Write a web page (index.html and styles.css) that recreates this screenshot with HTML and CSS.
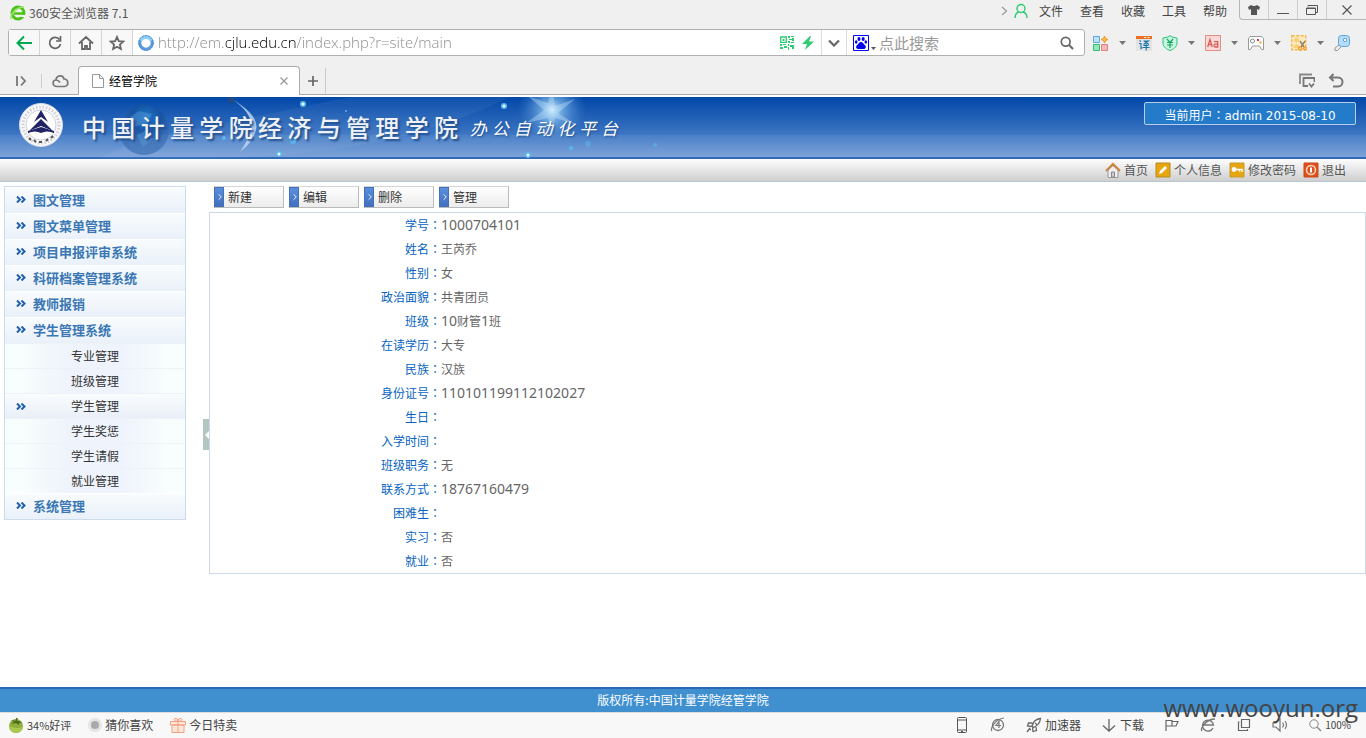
FILE: index.html
```html
<!DOCTYPE html>
<html lang="zh-CN">
<head>
<meta charset="utf-8">
<title>经管学院</title>
<link rel="stylesheet" href="styles.css">
</head>
<body>
<header class="chrome">
  <div class="titlebar">
    <svg class="i16" viewBox="0 0 16 16"><circle cx="8" cy="8" r="6" fill="none" stroke="#4cc417" stroke-width="3"/><path d="M4 8.500h9" stroke="#4cc417" stroke-width="2.500"/><path d="M11 10h5v2h-5z" fill="#f0f0f0"/><path d="M1 14C0 9 7 2 14 2" fill="none" stroke="#9be26b" stroke-width="1.500"/></svg>
    <span class="app-name">360安全浏览器 7.1</span>
    <div class="menu">
      <svg class="menu-arrow" width="7" height="10" viewBox="0 0 7 10"><path d="M1 1l4.500 4L1 9" fill="none" stroke="#999" stroke-width="1.200"/></svg>
      <svg class="menu-user" width="14" height="16" viewBox="0 0 14 16"><circle cx="7" cy="5.500" r="4" fill="none" stroke="#2ecc71" stroke-width="1.400"/><path d="M1 15c0-3.500 2-5.500 4-6M13 15c0-3.500-2-5.500-4-6" fill="none" stroke="#2ecc71" stroke-width="1.400"/></svg>
      <button>文件</button><button>查看</button><button>收藏</button><button>工具</button><button>帮助</button>
    </div>
    <div class="window-controls">
      <button aria-label="皮肤"><svg width="14" height="12" viewBox="0 0 14 12"><path d="M4 1q3 2 6 0l3 2-1 3-2-1v6H4V5L2 6 1 3z" fill="#555"/></svg></button>
      <button aria-label="最小化"><svg width="14" height="12" viewBox="0 0 14 12"><path d="M1 9.500h12" stroke="#555"/></svg></button>
      <button aria-label="还原"><svg width="14" height="12" viewBox="0 0 14 12"><path d="M3 2.500V1.500h9.500v7H11M1.500 4h9v6.500h-9zM1 4.500h10" fill="none" stroke="#555"/></svg></button>
      <button class="close" aria-label="关闭"><svg width="12" height="12" viewBox="0 0 12 12"><path d="M1.500 1.500l9 9M10.500 1.500l-9 9" stroke="#555" stroke-width="1.200"/></svg></button>
    </div>
  </div>
  <div class="address-row">
    <div class="address-box">
      <button class="nav-btn" aria-label="后退"><svg class="i16" viewBox="0 0 16 16"><path d="M8 1.500L1.500 8 8 14.500M2 8h14" fill="none" stroke="#00a94f" stroke-width="2"/></svg></button>
      <button class="nav-btn" aria-label="刷新"><svg class="i16" viewBox="0 0 16 16"><path d="M12.500 4.500A5.500 5.500 0 1 0 13.500 9M13.500 1v5H9" fill="none" stroke="#666" stroke-width="1.700"/></svg></button>
      <button class="nav-btn" aria-label="主页"><svg class="i16" viewBox="0 0 16 16"><path d="M1 8.500L8 2l7 6.500M4 7v7h3v-3h2v3h3V7" fill="none" stroke="#666" stroke-width="1.800"/></svg></button>
      <button class="nav-btn" aria-label="收藏"><svg class="i16" viewBox="0 0 16 16"><path d="M8 2l1.800 4.200 4.500.4-3.400 3 1 4.400L8 11.700 4.100 14l1-4.400-3.400-3 4.500-.4z" fill="none" stroke="#666" stroke-width="1.800"/></svg></button>
      <svg class="i16 globe" viewBox="0 0 16 16"><circle cx="8" cy="8" r="6.200" fill="none" stroke="#5b9be0" stroke-width="3"/><path d="M2.500 5.500A6.200 6.200 0 0 1 13.500 5.500" fill="none" stroke="#8ed0f4" stroke-width="3"/><circle cx="8" cy="8" r="7.300" fill="none" stroke="#4286d3" stroke-dasharray="2 1"/></svg>
      <input class="url" aria-label="地址" value="http://em.cjlu.edu.cn/index.php?r=site/main">
      <svg class="qr" width="14" height="14" viewBox="0 0 14 14"><path d="M.7 1h5.600v5.300H.7z" fill="none" stroke="#2ecc71" stroke-width="1.300"/><path d="M2.500 3h2v2h-2zM8 0h2v2H8zM11 0h3v1h-3zM9 3h3v1H9zM12 2h2v3h-2zM8 5h2v2H8zM11 6h3v1h-3zM0 8h2v2H0zM3 8h3v1H3zM4 10h3v2H4zM0 11h3v2H0zM8 8h1v2H8zM10 9h4v4h-2v-2h-2zM8 11h1v3H8z" fill="#2ecc71"/></svg>
      <svg class="bolt" width="12" height="16" viewBox="0 0 12 16"><path d="M8 1L0 9h5l-2 6 9-8.500H7L9 1z" fill="#2ecc71"/></svg>
      <button class="drop-btn" aria-label="历史"><svg width="12" height="8" viewBox="0 0 12 8"><path d="M1 1.500l5 5 5-5" fill="none" stroke="#666" stroke-width="2.200"/></svg></button>
      <svg class="i16 baidu" viewBox="0 0 16 16"><path d="M.5.500h15v15H.5z" fill="#fff" stroke="#00f"/><g fill="#00e"><ellipse cx="6" cy="4" rx="1.500" ry="2"/><ellipse cx="10.200" cy="4" rx="1.500" ry="2"/><ellipse cx="3.200" cy="7" rx="1.300" ry="1.700"/><ellipse cx="12.800" cy="7" rx="1.300" ry="1.700"/><path d="M8 7c2 0 2.500 2 4 3.300s1 3.700-1 3.700H5c-2 0-2.500-2.500-1-3.700S6 7 8 7z"/></g></svg>
      <svg class="mini-caret" width="5" height="3" viewBox="0 0 5 3"><path d="M0 0h5L2.500 3z" fill="#555"/></svg>
      <input class="search" aria-label="搜索" placeholder="点此搜索">
      <svg class="search-icon" width="14" height="14" viewBox="0 0 14 14"><circle cx="5.700" cy="5.700" r="4.400" fill="none" stroke="#666" stroke-width="1.700"/><path d="M9 9l4 4" stroke="#666" stroke-width="2"/></svg>
    </div>
    <div class="extensions">
      <svg class="i16" viewBox="0 0 16 16"><path d="M.5 1.500h6v6h-6z" fill="#bfe3fa" stroke="#5aa7dc"/><path d="M.5 9.500h6v6h-6z" fill="#8eeabb" stroke="#3bb878"/><path d="M8.500 9.500h6v6h-6z" fill="#f9b9b9" stroke="#df7f7f"/><path d="M11.500 1l1 2.500 2.500 1-2.500 1-1 2.500-1-2.500-2.500-1 2.500-1z" fill="#ffc13b" stroke="#ee9520"/></svg>
      <svg class="caret" viewBox="0 0 7 4"><path d="M0 0h7L3.500 4z" fill="#777"/></svg>
      <svg class="i16" viewBox="0 0 16 16"><path d="M0 3h16v13H0z" fill="#e4e4e4"/><path d="M0 1h16v3H0z" fill="#f07022"/><path d="M8 2.500h2M11.500 2.500h2" stroke="#fff"/><path d="M3.500 5.500l1.500 1M3 8.500h2v5l1.500-1M7.500 6h5l-5 3.500M8.500 6.500l4.500 3M7.500 10.500h5M7 12.500h6.500M10.200 9v6.500" stroke="#1676a6" fill="none" stroke-width="1.100"/></svg>
      <svg class="i16" viewBox="0 0 16 16"><path d="M8 .5l2 1.500 5 1v5c0 4-4 6.500-7 7.500-3-1-7-3.500-7-7.500V3l5-1z" fill="#c8f8e0" stroke="#2fbe80"/><path d="M5 4l3 3.500L11 4M8 7v6M5 7.500h6M5 10h6" fill="none" stroke="#18a666" stroke-width="1.200"/></svg>
      <svg class="caret" viewBox="0 0 7 4"><path d="M0 0h7L3.500 4z" fill="#777"/></svg>
      <svg class="i16" viewBox="0 0 16 16"><path d="M.5.500h15v15H.5z" fill="#fbd9d6" stroke="#e28d88"/><path d="M2.700 12L5 4.500 7.300 12M3.500 9.500h3M9 6.700h3.700V12H9.800Q9 12 9 10.600T9.800 9.200h2.900" fill="none" stroke="#d9605a" stroke-width="1.300"/></svg>
      <svg class="caret" viewBox="0 0 7 4"><path d="M0 0h7L3.500 4z" fill="#777"/></svg>
      <svg class="i16" viewBox="0 0 16 16"><path d="M2 1.500h12l1.500 2v11h-2L11.500 11h-7l-2 3.500h-2v-11z" fill="#fff" stroke="#999"/><circle cx="4.500" cy="6" r="2" fill="none" stroke="#888"/><path d="M9 4h2v2H9z" fill="#d33"/><path d="M11.500 6.500h2v2h-2z" fill="#f39a24"/></svg>
      <svg class="caret" viewBox="0 0 7 4"><path d="M0 0h7L3.500 4z" fill="#777"/></svg>
      <svg class="i16" viewBox="0 0 16 16"><path d="M.7.700h14v14H.7z" fill="#fdeac0" stroke="#f0b84a" stroke-width="1.400" stroke-dasharray="3 1.500"/><circle cx="5.500" cy="5" r="2.500" fill="#f9d178"/><path d="M2 13c0-5 7-5 7 0z" fill="#f9d178"/><path d="M9 6l4 6M14 6l-4 6" stroke="#8d8268" stroke-width="1.400"/><circle cx="9.200" cy="13.500" r="1.800" fill="#ffd071" stroke="#f08c1e"/><circle cx="14" cy="13.500" r="1.500" fill="#ffd071" stroke="#f08c1e"/></svg>
      <svg class="caret" viewBox="0 0 7 4"><path d="M0 0h7L3.500 4z" fill="#777"/></svg>
      <svg class="i16" viewBox="0 0 16 16"><path d="M5 10l-4 3v2.500h2.500L7 12" fill="#eee" stroke="#999"/><rect x="4.500" y=".5" width="11" height="11" rx="3" fill="#b5dcf8" stroke="#5fa3db"/><circle cx="11" cy="5" r="1.700" fill="#fff" stroke="#5fa3db"/></svg>
    </div>
  </div>
  <div class="tab-row">
    <button class="icon-btn side" aria-label="侧边栏"><svg width="11" height="12" viewBox="0 0 11 12"><path d="M1 1v10M5 1.500L9 6l-4 4.500" fill="none" stroke="#777" stroke-width="1.800"/></svg></button>
    <button class="icon-btn cloud" aria-label="云"><svg width="17" height="14" viewBox="0 0 17 14"><path d="M5 12.500C-.5 12.500.5 6 4 6 4.500 1 11 .5 12 5c5 0 5 7.500.5 7.500zM4 6c2.500 0 3 1 4 2.500" fill="none" stroke="#777" stroke-width="1.700"/></svg></button>
    <div class="tab">
      <svg width="12" height="14" viewBox="0 0 12 14"><path d="M.5.500h7l4 4v9H.5zM7.500.500v4h4" fill="#fff" stroke="#999"/></svg>
      <span>经管学院</span>
      <button class="icon-btn" aria-label="关闭标签"><svg width="8" height="8" viewBox="0 0 8 8"><path d="M.5.500l7 7M7.500.500l-7 7" stroke="#999" stroke-width="1.300"/></svg></button>
    </div>
    <button class="icon-btn plus" aria-label="新标签"><svg width="10" height="10" viewBox="0 0 10 10"><path d="M5 0v10M0 5h10" stroke="#666" stroke-width="1.700"/></svg></button>
    <div class="tab-tools">
      <button class="icon-btn" aria-label="标签列表"><svg class="i16" viewBox="0 0 16 16"><path d="M1 11V1.500h12" fill="none" stroke="#888" stroke-width="1.800"/><path d="M9 13H4.500V5h11v4M10 10.500l2.500 3 2.500-3" fill="none" stroke="#777" stroke-width="1.800"/></svg></button>
      <button class="icon-btn" aria-label="恢复标签"><svg class="i16" viewBox="0 0 16 16"><path d="M5.500 1L2 4.500 5.500 8M2 4.500h8c6 0 6 9 0 9H5" fill="none" stroke="#777" stroke-width="2"/></svg></button>
    </div>
  </div>
</header>

<div class="banner">
  <svg class="banner-art" width="700" height="61" viewBox="0 0 700 61">
    <defs>
      <radialGradient id="flare"><stop offset="0" stop-color="#d5f1ff"/><stop offset=".3" stop-color="#8dc4ef" stop-opacity=".7"/><stop offset="1" stop-color="#4c8bd5" stop-opacity="0"/></radialGradient>
      <radialGradient id="earth" cx=".55" cy=".25"><stop offset="0" stop-color="#1f78c9"/><stop offset=".6" stop-color="#15519f"/><stop offset="1" stop-color="#2d64ab" stop-opacity=".7"/></radialGradient>
    </defs>
    <path d="M100 61Q135 40 200 31L350 0h160q-120 60-300 61z" fill="#fff" opacity=".05"/>
    <circle cx="144" cy="33" r="25" fill="url(#earth)" opacity=".8"/>
    <path d="M130 20l9-6 13 3-5 9-13 4zM137 38l10-5 6 9-10 8z" fill="#5c9ed6" opacity=".45"/>
    <path d="M232 2q28 17 24 31-3 12-16 22 9-13 11-23 2-16-19-30z" fill="#c4dcf6" opacity=".8"/>
    <circle cx="231" cy="3" r="3" fill="#274a7d"/>
    <circle cx="552" cy="13" r="34" fill="url(#flare)"/>
    <path d="M552-12l3 21 20-7-17 14 19 12-22-7-3 20-4-20-22 5 18-13-16-14 20 7z" fill="#cbeaff" opacity=".35"/>
    <g fill="#5bb8ef"><circle cx="303" cy="7" r="3"/><circle cx="293" cy="44" r="3"/><circle cx="279" cy="57" r="3"/><circle cx="504" cy="9" r="3"/><circle cx="528" cy="58" r="3"/><circle cx="346" cy="14" r="1"/><circle cx="571" cy="51" r="2"/><circle cx="588" cy="47" r="3" opacity=".5"/><circle cx="655" cy="48" r="2" opacity=".6"/><circle cx="224" cy="41" r="2"/></g>
    <g fill="#e9fbff"><circle cx="303" cy="7" r="1.500"/><circle cx="279" cy="57" r="1.500"/><circle cx="504" cy="9" r="1.500"/><circle cx="528" cy="58" r="1.500"/></g>
  </svg>
  <svg class="logo" width="46" height="46" viewBox="0 0 46 46">
    <circle cx="23" cy="23" r="21.500" fill="#f8f8fa" stroke="#d8dce8"/>
    <circle cx="23" cy="23" r="18" fill="none" stroke="#cfcfd8" stroke-width="3" stroke-dasharray="1.500 1.800"/>
    <circle cx="23" cy="23" r="15" fill="#fff" stroke="#bbc" stroke-width=".7"/>
    <path d="M23 8l7 12-7-5-7 5z" fill="#202464"/><path d="M23 17l12 12-12-5-12 5z" fill="#202464"/><path d="M10 31q7-3 13 0 6-3 13 0v-2l-13-4-13 4z" fill="#202464"/>
    <path d="M11 36l2 2M16 38l2 2M21 40h3M28 39l2-2M33 36l2-2" stroke="#555" stroke-width="2"/>
  </svg>
  <h1>中国计量学院经济与管理学院</h1>
  <p class="platform">办公自动化平台</p>
  <div class="user-box">当前用户<span class="colon" lang="zh-TW">：</span>admin 2015-08-10</div>
</div>

<nav class="quick-nav">
  <a href="#"><svg class="i16" viewBox="0 0 16 16"><path d="M3 8v7.500h10V8L8 3.500z" fill="#eee" stroke="#999"/><path d="M1 9l7-7 7 7" fill="none" stroke="#c9853f" stroke-width="2.200"/><path d="M6.500 10h3v5h-3z" fill="#ccc" stroke="#888"/></svg>首页</a>
  <a href="#"><svg class="i16" viewBox="0 0 16 16"><path d="M1 1h14v14H1z" fill="#e6a610" stroke="#b98a20"/><path d="M4 12l1-3 5-5 2 2-5 5z" fill="#fff"/></svg>个人信息</a>
  <a href="#"><svg class="i16" viewBox="0 0 16 16"><path d="M1 1h14v14H1z" fill="#e6a610" stroke="#c99a30"/><circle cx="5" cy="7.500" r="2.400" fill="#fff"/><path d="M7 7.500h6v2.500M10.500 7.500v2" fill="none" stroke="#fff" stroke-width="1.500"/></svg>修改密码</a>
  <a href="#"><svg class="i16" viewBox="0 0 16 16"><path d="M1 1h14v14H1z" fill="#e04e1a" stroke="#c8491e"/><circle cx="8" cy="8" r="4.500" fill="none" stroke="#ffd9c8" stroke-width="1.500"/><path d="M8 5.500v5" stroke="#fff" stroke-width="2"/></svg>退出</a>
</nav>

<div class="content">
  <aside class="sidebar">
    <a class="group" href="#"><svg class="chev" viewBox="0 0 10 7"><path d="M1 .5l3 3-3 3M5.500.500l3 3-3 3" fill="none" stroke="#1f5fae" stroke-width="2"/></svg>图文管理</a>
    <a class="group" href="#"><svg class="chev" viewBox="0 0 10 7"><path d="M1 .5l3 3-3 3M5.500.500l3 3-3 3" fill="none" stroke="#1f5fae" stroke-width="2"/></svg>图文菜单管理</a>
    <a class="group" href="#"><svg class="chev" viewBox="0 0 10 7"><path d="M1 .5l3 3-3 3M5.500.500l3 3-3 3" fill="none" stroke="#1f5fae" stroke-width="2"/></svg>项目申报评审系统</a>
    <a class="group" href="#"><svg class="chev" viewBox="0 0 10 7"><path d="M1 .5l3 3-3 3M5.500.500l3 3-3 3" fill="none" stroke="#1f5fae" stroke-width="2"/></svg>科研档案管理系统</a>
    <a class="group" href="#"><svg class="chev" viewBox="0 0 10 7"><path d="M1 .5l3 3-3 3M5.500.500l3 3-3 3" fill="none" stroke="#1f5fae" stroke-width="2"/></svg>教师报销</a>
    <a class="group" href="#"><svg class="chev" viewBox="0 0 10 7"><path d="M1 .5l3 3-3 3M5.500.500l3 3-3 3" fill="none" stroke="#1f5fae" stroke-width="2"/></svg>学生管理系统</a>
    <a class="sub" href="#">专业管理</a>
    <a class="sub" href="#">班级管理</a>
    <a class="sub active" href="#"><svg class="chev" viewBox="0 0 10 7"><path d="M1 .5l3 3-3 3M5.500.500l3 3-3 3" fill="none" stroke="#1f5fae" stroke-width="2"/></svg>学生管理</a>
    <a class="sub" href="#">学生奖惩</a>
    <a class="sub" href="#">学生请假</a>
    <a class="sub" href="#">就业管理</a>
    <a class="group" href="#"><svg class="chev" viewBox="0 0 10 7"><path d="M1 .5l3 3-3 3M5.500.500l3 3-3 3" fill="none" stroke="#1f5fae" stroke-width="2"/></svg>系统管理</a>
  </aside>
  <div class="gutter"><button class="collapse" aria-label="收起菜单"><svg width="4" height="8" viewBox="0 0 4 8"><path d="M4 0v8L0 4z" fill="#fff"/></svg></button></div>
  <main>
    <div class="toolbar">
      <button><svg width="10" height="20" viewBox="0 0 10 20"><path d="M4 7l3 3-3 3" fill="none" stroke="#fff"/></svg><span>新建</span></button>
      <button><svg width="10" height="20" viewBox="0 0 10 20"><path d="M4 7l3 3-3 3" fill="none" stroke="#fff"/></svg><span>编辑</span></button>
      <button><svg width="10" height="20" viewBox="0 0 10 20"><path d="M4 7l3 3-3 3" fill="none" stroke="#fff"/></svg><span>删除</span></button>
      <button><svg width="10" height="20" viewBox="0 0 10 20"><path d="M4 7l3 3-3 3" fill="none" stroke="#fff"/></svg><span>管理</span></button>
    </div>
    <table class="details">
      <tr><th scope="row">学号<span class="colon" lang="zh-TW">：</span></th><td><span class="num">1000704101</span></td></tr>
      <tr><th scope="row">姓名<span class="colon" lang="zh-TW">：</span></th><td>王芮乔</td></tr>
      <tr><th scope="row">性别<span class="colon" lang="zh-TW">：</span></th><td>女</td></tr>
      <tr><th scope="row">政治面貌<span class="colon" lang="zh-TW">：</span></th><td>共青团员</td></tr>
      <tr><th scope="row">班级<span class="colon" lang="zh-TW">：</span></th><td><span class="num">10</span>财管<span class="num">1</span>班</td></tr>
      <tr><th scope="row">在读学历<span class="colon" lang="zh-TW">：</span></th><td>大专</td></tr>
      <tr><th scope="row">民族<span class="colon" lang="zh-TW">：</span></th><td>汉族</td></tr>
      <tr><th scope="row">身份证号<span class="colon" lang="zh-TW">：</span></th><td><span class="num">110101199112102027</span></td></tr>
      <tr><th scope="row">生日<span class="colon" lang="zh-TW">：</span></th><td></td></tr>
      <tr><th scope="row">入学时间<span class="colon" lang="zh-TW">：</span></th><td></td></tr>
      <tr><th scope="row">班级职务<span class="colon" lang="zh-TW">：</span></th><td>无</td></tr>
      <tr><th scope="row">联系方式<span class="colon" lang="zh-TW">：</span></th><td><span class="num">18767160479</span></td></tr>
      <tr><th scope="row">困难生<span class="colon" lang="zh-TW">：</span></th><td></td></tr>
      <tr><th scope="row">实习<span class="colon" lang="zh-TW">：</span></th><td>否</td></tr>
      <tr><th scope="row">就业<span class="colon" lang="zh-TW">：</span></th><td>否</td></tr>
    </table>
  </main>
</div>

<footer class="copyright">版权所有:中国计量学院经管学院</footer>

<div class="statusbar">
  <div class="status-left">
    <button class="rating"><svg class="i16" viewBox="0 0 16 16"><circle cx="8" cy="9" r="7" fill="#8fae3a"/><path d="M1 9a7 7 0 0 0 14 0q-4 4-14 0z" fill="#a9c850"/><path d="M8 4L3 3l3 2-3 2 5-1 3 2v-2l3 0-3-2z" fill="#4b6b22"/><path d="M8 5l1-4" stroke="#4b6b22" stroke-width="1.500"/></svg>34%好评</button>
    <button><svg width="14" height="14" viewBox="0 0 14 14"><circle cx="7" cy="7" r="7" fill="#e4e4e4"/><circle cx="7" cy="7" r="4" fill="#aaa"/></svg>猜你喜欢</button>
    <button><svg class="i16" viewBox="0 0 16 16"><path d="M2 8h12v7.500H2zM.5 4.500h15V8H.5zM8 4.500v11M8 4C5 5 3 2.500 5 1.500S8 3 8 4c0-1 1-3.500 3-2.500S11 5 8 4" fill="#ffe7dc" stroke="#f0a080"/></svg>今日特卖</button>
  </div>
  <div class="status-right">
    <button aria-label="手机"><svg class="i16" viewBox="0 0 16 16"><rect x="3.500" y=".5" width="9" height="15" rx="1" fill="none" stroke="#555"/><path d="M3.500 3h9M3.500 13h9M7 14.500h2" stroke="#555"/></svg></button>
    <button aria-label="内核"><svg class="i16" viewBox="0 0 16 16"><circle cx="8" cy="8" r="5.500" fill="none" stroke="#777" stroke-width="1.300"/><path d="M2 14c-2-2 3-12 12-13M9 11V4.500L6 8.500h5" fill="none" stroke="#777" stroke-width="1.200"/></svg></button>
    <button><svg class="i16" viewBox="0 0 16 16"><path d="M6 9C7 5 10 2 14.500 1.500 14 6 11 9 7.500 10.500zM6 6H2.500L1.500 9l4 .5M10 10l.5 3.500L7 14.500l-.5-4M4 11l-3 4M9 6l2 1.500M3 12l2 1" fill="none" stroke="#666" stroke-width="1.300"/></svg>加速器</button>
    <button><svg class="i16" viewBox="0 0 16 16"><path d="M8 2v12M2 8.500L8 14l6-5.500" fill="none" stroke="#666" stroke-width="1.300"/></svg>下载</button>
    <button aria-label="旗标"><svg class="i16" viewBox="0 0 16 16"><path d="M2 14V3.500h6V9H2M8 4.500h6L12 9H8" fill="none" stroke="#666" stroke-width="1.200"/></svg></button>
    <button aria-label="浏览器"><svg class="i16" viewBox="0 0 16 16"><path d="M13 11a5.500 5.500 0 1 1 .5-3H4M2 14c-2-2 4-12 13-12" fill="none" stroke="#777" stroke-width="1.400"/></svg></button>
    <button aria-label="窗口"><svg class="i16" viewBox="0 0 16 16"><path d="M5.500 2.500h8v8h-8zM3.500 5h-1v8.500h9V12" fill="none" stroke="#666" stroke-width="1.200"/></svg></button>
    <button aria-label="声音"><svg class="i16" viewBox="0 0 16 16"><path d="M1 6h3l4-4v12l-4-4H1zM10.500 5.500q2 2.500 0 5M13 4q3 4 0 8" fill="none" stroke="#777" stroke-width="1.200"/></svg></button>
    <button class="zoom"><svg width="14" height="14" viewBox="0 0 14 14"><circle cx="6" cy="6" r="4.200" fill="none" stroke="#888"/><path d="M9 9l4 4" stroke="#888" stroke-width="1.500"/></svg>100%</button>
  </div>
</div>
<div class="watermark">www.wooyun.org</div>
</body>
</html>
```
FILE: styles.css
```css
* { box-sizing: border-box; }
body {
  margin: 0;
  min-height: 100vh;
  display: flex;
  flex-direction: column;
  position: relative;
  background: #fff;
  font: 12px/16px "Noto Sans CJK SC", sans-serif;
  color: #666;
}
button, input { font: inherit; color: inherit; background: none; border: 0; padding: 0; margin: 0; }
button { display: flex; align-items: center; justify-content: center; white-space: nowrap; }
a { text-decoration: none; color: inherit; }
svg { flex: none; display: block; }
.i16 { width: 16px; height: 16px; }
.colon { font-family: "Noto Sans CJK TC", sans-serif; }

.chrome { background: #f0f0f0; border-bottom: 2px solid #fff; }
.titlebar { display: flex; height: 29px; padding-left: 10px; }
.titlebar > .i16 { margin-top: 5px; }
.app-name { margin: 5px auto 0 3px; color: #555; }
.menu { display: flex; height: 22px; align-items: center; gap: 17px; padding-right: 12px; color: #444; }
.menu-user { margin-left: -11px; margin-right: -6px; }
.window-controls { display: flex; height: 20px; border: solid #b5b5b5; border-width: 0 0 1px 1px; border-bottom-left-radius: 4px; }
.window-controls button { width: 29px; border-right: 1px solid #ccc; }
.window-controls .close { width: 39px; border: 0; }

.address-row { display: flex; align-items: center; height: 27px; padding: 0 16px 0 8px; }
.address-box { flex: 1; height: 27px; display: flex; align-items: center; background: #fff; border: 1px solid #b0b0b0; border-radius: 3px; }
.nav-btn { width: 31px; height: 25px; background: #f8f8f8; border-right: 1px solid #d5d5d5; }
.globe { margin: 0 4px 0 5px; }
.url {
  flex: 1;
  min-width: 0;
  height: 25px;
  font: 300 15px/25px "Open Sans", sans-serif;
  color: transparent;
  caret-color: #333;
  background: linear-gradient(90deg, #888 67px, #000 67px, #000 138px, #888 138px);
  -webkit-background-clip: text;
  background-clip: text;
}
.bolt { margin: 0 7px 0 8px; }
.drop-btn { width: 26px; height: 25px; border: solid #ddd; border-width: 0 1px; }
.baidu { margin-left: 6px; }
.mini-caret { margin: 11px 3px 0 2px; }
.search { width: 181px; font-size: 15px; line-height: 25px; height: 25px; }
.search::placeholder { color: #999; }
.search-icon { margin-right: 10px; }
.extensions { display: flex; align-items: center; gap: 10px; margin-left: 8px; }
.caret { width: 7px; height: 4px; }

.tab-row { display: flex; align-items: flex-end; height: 39px; padding-left: 16px; border-bottom: 1px solid #aaa; }
.icon-btn { height: 26px; }
.side { width: 26px; justify-content: flex-start; border-right: 1px solid #ccc; height: 14px; margin-bottom: 6px; }
.cloud { margin: 0 9px 0 10px; }
.tab { width: 222px; height: 29px; margin-bottom: -1px; display: flex; align-items: center; gap: 5px; padding: 0 11px 0 13px; color: #000; background: #fff; border: 1px solid #aaa; border-bottom: 0; border-radius: 4px 4px 0 0; }
.tab .icon-btn { margin-left: auto; }
.plus { width: 26px; border-right: 1px solid #ccc; }
.tab-tools { display: flex; gap: 13px; margin-left: auto; padding-right: 22px; }

.banner { position: relative; display: flex; align-items: flex-start; height: 62px; padding: 5px 10px 0 18px; border-bottom: 2px solid #2f6abb; background: linear-gradient(#0247a8, #3c75c2 62%, #4a80c8 64%, #7da3d8); color: #fff; }
.banner-art { position: absolute; left: 0; top: 0; }
.banner > :not(.banner-art) { position: relative; }
.banner h1 { margin: 9px 0 0 18px; width: 376px; font-size: 24px; line-height: 32px; font-weight: 500; text-align-last: justify; color: #eef1f6; text-shadow: 2px 2px 2px #234f8c; }
.platform { margin: 14px auto 0 12px; width: 148px; font-size: 17px; line-height: 24px; font-style: italic; text-align-last: justify; text-shadow: 1px 1px 2px #234f8c; }
.user-box { min-width: 212px; height: 23px; line-height: 21px; font-family: "DejaVu Sans", "Noto Sans CJK SC", sans-serif; text-align: center; background: #237bc9; border: 1px solid #b9cfe9; border-radius: 2px; padding-top: 1px; }

.quick-nav { display: flex; justify-content: flex-end; gap: 7px; height: 23px; padding: 0 20px; align-items: center; background: linear-gradient(#fdfdfd, #cfcfcf); border-bottom: 1px solid #b7c5d4; }
.quick-nav a { display: flex; gap: 3px; align-items: center; color: #555; }

.content { flex: 1; display: flex; padding-left: 4px; }
.sidebar { width: 182px; align-self: flex-start; margin-top: 4px; border: 1px solid #cddcea; }
.sidebar a { display: flex; align-items: center; }
.chev { width: 10px; height: 7px; }
.group { height: 26px; padding-left: 11px; padding-bottom: 2px; gap: 7px; font-size: 13px; font-weight: 700; color: #3a77b4; background: linear-gradient(#f8fcfd, #eaf0f9); border-top: 1px solid #fff; }
.sub { position: relative; height: 25px; justify-content: center; color: #333; background: linear-gradient(90deg, #f8fdfd 10%, #eff3fc 35%, #eff3fc 65%, #f8fdfd 90%); border-top: 1px solid #eef2f6; }
.sub.active { background: linear-gradient(#fafcfd, #e9eff8); }
.sub .chev { position: absolute; left: 11px; }
.gutter { width: 23px; display: flex; align-items: center; justify-content: flex-end; }
.collapse { width: 6px; height: 31px; background: #b2c6c2; justify-content: flex-end; }

main { flex: 1; min-width: 0; padding-top: 4px; }
.toolbar { display: flex; gap: 5px; padding-left: 5px; }
.toolbar button { width: 70px; height: 22px; justify-content: flex-start; gap: 4px; background: linear-gradient(#fff, #ececec); border: solid #bbb; border-width: 1px 1px 1px 0; border-top-color: #d5d5d5; color: #333; }
.toolbar svg { background: linear-gradient(#5a90dc, #416fbc); border: solid #8ab2e8; border-width: 0 0 0 1px; outline: 1px solid #4170bd; outline-offset: -1px; }
.details { width: 100%; margin-top: 4px; border: 1px solid #cbd9e6; border-spacing: 0; table-layout: fixed; }
.details tr { height: 24px; }
.details th, .details td { padding: 0; line-height: 24px; height: 24px; }
.details th { width: 20%; font-weight: 400; text-align: right; color: #0663c2; }
.num { font: 14px/16px "Noto Sans", sans-serif; }

.copyright { height: 25px; line-height: 22px; text-align: center; color: #fff; background: #4090d0; border-top: 2px solid #2a67b8; }
.statusbar { display: flex; justify-content: space-between; align-items: center; height: 26px; padding: 0 15px 2px 8px; background: #f8f8f8; border-top: 1px solid #ddd; color: #444; }
.status-left, .status-right { display: flex; align-items: center; }
.status-left { gap: 17px; }
.status-right { gap: 20px; }
.statusbar button { gap: 3px; }
.statusbar .rating { font-size: 11px; }
.statusbar .zoom { font-size: 10px; }
.watermark { position: absolute; right: 8px; bottom: 14px; font: 24px/32px "Open Sans", sans-serif; color: #444; pointer-events: none; }
```
